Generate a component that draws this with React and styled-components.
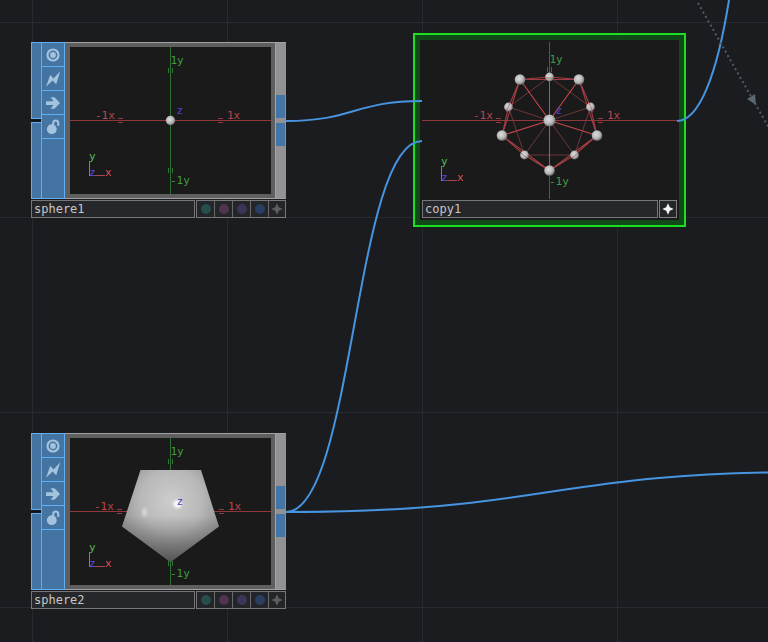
import React from "react";
import styled, { createGlobalStyle } from "styled-components";

const MONO = '"DejaVu Sans Mono", "Liberation Mono", monospace';

const GlobalStyle = createGlobalStyle`
  *, *::before, *::after { box-sizing: border-box; }
  body { margin: 0; background: #1b1c20; font-family: ${MONO}; }
  button, input { font: inherit; margin: 0; padding: 0; border-radius: 0; }
`;

const Network = styled.main`
  position: relative;
  min-height: 100vh;
  overflow: hidden;
  background-color: #1b1c20;
  background-image:
    linear-gradient(to right, #292a30 1px, transparent 1px),
    linear-gradient(to bottom, #292a30 1px, transparent 1px);
  background-size: 195px 195px;
  background-position: 32px 22px;
`;

const Wires = styled.svg`
  position: absolute;
  inset: 0;
  width: 100%;
  height: 100%;
  pointer-events: none;
`;

const Node = styled.section`
  position: absolute;
  left: ${(p) => p.$x}px;
  top: ${(p) => p.$y}px;
  width: ${(p) => p.$w}px;
  display: flex;
  flex-direction: column;
  gap: 1px;
`;

const SelectedNode = styled(Node)`
  padding: 2px;
  background: #1a1a1b;
  box-shadow: 0 0 0 5px #104a19;
  outline: 2px solid #1bdf20;
  outline-offset: 5px;
`;

const NodeBody = styled.div`
  display: flex;
  height: 157px;
  background: #5f5f5f;
  border-top: 1px solid #a2a2a2;
  border-bottom: 1px solid #a2a2a2;
`;

const Rail = styled.div`
  display: flex;
  margin: -1px 0;
`;

const InputRail = styled.div`
  display: flex;
  flex-direction: column;
  gap: 3px;
  width: 10px;
  background: #14161a;
`;

const InputPort = styled.button`
  flex: 1;
  background: #4474a2;
  border: 1px solid #62aef4;
  border-right: 0;
`;

const FlagColumn = styled.div`
  display: flex;
  flex-direction: column;
  width: 24px;
  background: #4474a2;
  border: 1px solid #62aef4;
`;

const FlagButton = styled.button`
  display: grid;
  place-items: center;
  height: 24px;
  background: transparent;
  border: 0;
  border-bottom: 1px solid #62aef4;
`;

const Viewer = styled.div`
  flex: 1;
  margin: 4px;
  margin-left: 5px;
  background: #1a1a1a;
`;

const Drawing = styled.svg`
  display: block;
  width: 100%;
  height: 100%;
  font: 11px ${MONO};
`;

const OutputRail = styled.div`
  display: flex;
  flex-direction: column;
  justify-content: center;
  gap: 5px;
  width: 11px;
  padding: 0 1px 0 0;
  background: #929294;
  border-left: 1px solid #a4a4a6;
`;

const OutputPort = styled.button`
  height: 23px;
  background: #4376a6;
  border: 0;
`;

const Footer = styled.div`
  display: flex;
  gap: 1px;
`;

const NameInput = styled.input`
  flex: 1;
  min-width: 0;
  height: 18px;
  padding: 0 2px 1px;
  color: #c6c6c6;
  background: #26272a;
  border: 1px solid #77777a;
  font-size: 12px;
`;

const Swatches = styled.div`
  display: flex;
  border: 1px solid #77777a;
`;

const SwatchButton = styled.button`
  display: grid;
  place-items: center;
  width: 18px;
  height: 16px;
  background: #242528;
  border: 0;
  border-right: 1px solid #69696c;
  &:last-child { width: 16px; border-right: 0; }
`;

const ActiveButton = styled.button`
  display: grid;
  place-items: center;
  width: 18px;
  height: 18px;
  background: #252628;
  border: 1px solid #808082;
`;

const Dot = styled.span`
  width: 10px;
  height: 10px;
  border-radius: 50%;
  background: ${(p) => p.$color};
`;

const CopyViewer = styled.div`
  height: 157px;
  background: #1a1a1a;
`;

const INK = "#a4c3df";

const TargetIcon = () => (
  <svg width="14" height="14" viewBox="0 0 14 14">
    <circle cx="7" cy="7" r="5.5" fill="none" stroke={INK} strokeWidth="2.2" />
    <circle cx="7" cy="7" r="2.9" fill={INK} />
  </svg>
);

const BoltIcon = () => (
  <svg width="16" height="16" viewBox="0 0 16 16">
    <path d="M1 15.8L5.2 4L8.6 7.6L15.2 .3L11.2 13.2L7.6 9.6Z" fill={INK} />
  </svg>
);

const ArrowIcon = () => (
  <svg width="14" height="14" viewBox="0 0 14 14">
    <path d="M0 5.2H7.5L4.6 1.2H8.5L14 7L8.5 12.8H4.6L7.5 9H0Z" fill={INK} />
  </svg>
);

const LockIcon = () => (
  <svg width="14" height="16" viewBox="0 0 14 16">
    <circle cx="5.8" cy="10.2" r="4.9" fill={INK} />
    <path d="M7.2 7V4.2C7.2 .7 12.3 .7 12.3 4.2V7" fill="none" stroke={INK} strokeWidth="2" />
  </svg>
);

const StarIcon = ({ color }) => (
  <svg width="12" height="12" viewBox="0 0 12 12">
    <path d="M6 .3L7.8 4.2L11.7 6L7.8 7.8L6 11.7L4.2 7.8L.3 6L4.2 4.2Z" fill={color} />
  </svg>
);

const RED = "#b8484c";
const GREEN = "#419b45";
const BLUE = "#4845c8";

const BallGradient = ({ id }) => (
  <radialGradient id={id} cx=".42" cy=".4" r=".62">
    <stop offset="0" stopColor="#dedede" />
    <stop offset=".6" stopColor="#b8b8b8" />
    <stop offset="1" stopColor="#696969" />
  </radialGradient>
);

const Axes = ({ w, h, cx, cy }) => (
  <g>
    <path d={`M0 ${cy}H${w}`} stroke="#8f383c" />
    <path d={`M${cx} 0V${h}`} stroke="#2f7135" />
  </g>
);

const Labels = ({ cx, cy, h, left, right, top, low, bottomTicks, rightTicks, leftTicks, lowX }) => (
  <g>
    <path d={`M${leftTicks} ${cy - 2}h5m-5 4h5M${rightTicks} ${cy - 2}h5m-5 4h5`} stroke="#94393d" />
    <path d={`M${cx - 2} ${top + 4}v5m4 -5v5`} stroke="#2f7737" />
    {bottomTicks && <path d={`M${cx - 2} ${bottomTicks}v5m4 -5v5`} stroke="#2f7737" />}
    <text x={left} y={cy - 2} fill={RED}>-1x</text>
    <text x={right} y={cy - 2} fill={RED}>1x</text>
    <text x={cx} y={top} fill={GREEN}>1y</text>
    <text x={lowX} y={low} fill={GREEN}>-1y</text>
    <text x={cx + 6} y={cy - 7} fill={BLUE}>z</text>
    <path d={`M19.5 ${h - 33}v15`} stroke="#45a84a" />
    <path d={`M20 ${h - 18.5}h15`} stroke="#a8444b" />
    <text x="19" y={h - 34} fill="#55b95b">y</text>
    <text x="19" y={h - 18} fill="#4c4be0">z</text>
    <text x="35" y={h - 18} fill="#d8565d">x</text>
  </g>
);

const SmallSphere = () => (
  <Drawing viewBox="0 0 201 147" role="img" aria-label="Small sphere">
    <defs><BallGradient id="ball-one" /></defs>
    <Axes w={201} h={147} cx={100.5} cy={73.5} />
    <circle cx="100.5" cy="73.5" r="4.7" fill="url(#ball-one)" />
    <Labels cx={100.5} cy={73.5} h={147} left={25} right={157} top={17} low={137}
      lowX={100} leftTicks={48} rightTicks={148} bottomTicks={121} />
  </Drawing>
);

const SOLID = "M70.5 32H131L149 88.5L100.5 124L52 88.5Z";

const LargeSphere = () => (
  <Drawing viewBox="0 0 201 147" role="img" aria-label="Low resolution sphere">
    <defs>
      <radialGradient id="shade" gradientUnits="userSpaceOnUse" cx="101" cy="63" r="62">
        <stop offset="0" stopColor="#cdcdcd" />
        <stop offset=".5" stopColor="#b8b8b8" />
        <stop offset="1" stopColor="#858585" />
      </radialGradient>
      <linearGradient id="floor" x1="0" y1="0" x2="0" y2="1">
        <stop offset=".5" stopColor="#444" stopOpacity="0" />
        <stop offset="1" stopColor="#3a3a3a" stopOpacity=".65" />
      </linearGradient>
      <radialGradient id="shine">
        <stop offset="0" stopColor="#fff" />
        <stop offset=".4" stopColor="#fff" stopOpacity=".8" />
        <stop offset="1" stopColor="#fff" stopOpacity="0" />
      </radialGradient>
    </defs>
    <Axes w={201} h={147} cx={100.5} cy={73.5} />
    <path d={SOLID} fill="url(#shade)" />
    <path d={SOLID} fill="url(#floor)" />
    <circle cx="107.5" cy="66" r="6" fill="url(#shine)" />
    <ellipse cx="74.5" cy="74" rx="4" ry="6" fill="url(#shine)" opacity=".4" />
    <Labels cx={100.5} cy={73.5} h={147} left={24} right={158} top={17} low={139}
      lowX={100} leftTicks={47} rightTicks={149} bottomTicks={123} />
  </Drawing>
);

const FRONT = [[98, 37.5], [157, 37.5], [175, 93.5], [127.5, 128.5], [80, 93.5]];
const BACK = [[127.5, 35], [168.5, 65], [152.5, 113], [102.5, 113], [86.5, 65]];
const ring = (pts) => `M${pts.map((p) => p.join(" ")).join("L")}Z`;
const spokes = (pts) => pts.map((p) => `M127.5 78.5L${p.join(" ")}`).join("");
const zigzag = ring(FRONT.flatMap((p, i) => [p, BACK[i]]));

const CopiedSpheres = () => (
  <Drawing viewBox="0 0 255 157" role="img" aria-label="Spheres copied to the points of a sphere">
    <defs><BallGradient id="ball-copy" /></defs>
    <Axes w={255} h={157} cx={127.5} cy={78.5} />
    <g fill="none">
      <path d={ring(BACK) + spokes(BACK)} stroke="#843c40" strokeWidth=".8" />
      <path d={zigzag + ring(FRONT)} stroke="#a13e43" strokeWidth="1.1" />
      <path d={spokes(FRONT)} stroke="#c8484b" strokeWidth="1.1" />
      <path d="M127.5 39V74" stroke="#548844" />
    </g>
    <g fill="url(#ball-copy)">
      {BACK.map(([x, y]) => <circle key={`${x}-${y}`} cx={x} cy={y} r="4.4" />)}
      {FRONT.map(([x, y]) => <circle key={`${x}-${y}`} cx={x} cy={y} r="5.3" />)}
      <circle cx="127.5" cy="78.5" r="6" />
    </g>
    <path d="M123 36h9M84 70l4-9M171 70l-4-9M99 111l6 5M156 111l-6 5" fill="none" stroke="#9b5558" strokeWidth=".7" />
    <Labels cx={127.5} cy={78.5} h={157} left={51} right={185} top={21} low={143}
      lowX={127} leftTicks={74} rightTicks={176} />
  </Drawing>
);

const FLAGS = [
  ["Viewer", TargetIcon],
  ["Bypass", BoltIcon],
  ["Clone", ArrowIcon],
  ["Lock", LockIcon],
];
const SWATCHES = [
  ["Display", "#264f4b"],
  ["Render", "#50344f"],
  ["Pickable", "#3b3558"],
  ["Compare", "#293f61"],
];

const OperatorNode = ({ name, x, y, children }) => (
  <Node $x={x} $y={y} $w={255} aria-label={name}>
    <NodeBody>
      <Rail>
        <InputRail>
          <InputPort aria-label="Input, upper part" />
          <InputPort aria-label="Input, lower part" />
        </InputRail>
        <FlagColumn>
          {FLAGS.map(([label, Icon]) => (
            <FlagButton key={label} aria-label={label}><Icon /></FlagButton>
          ))}
        </FlagColumn>
      </Rail>
      <Viewer>{children}</Viewer>
      <OutputRail>
        <OutputPort aria-label="Output, upper part" />
        <OutputPort aria-label="Output, lower part" />
      </OutputRail>
    </NodeBody>
    <Footer>
      <NameInput aria-label="Operator name" defaultValue={name} spellCheck={false} />
      <Swatches>
        {SWATCHES.map(([label, color]) => (
          <SwatchButton key={label} aria-label={label}><Dot $color={color} /></SwatchButton>
        ))}
        <SwatchButton aria-label="Activate viewer"><StarIcon color="#5d5e61" /></SwatchButton>
      </Swatches>
    </Footer>
  </Node>
);

export default function App() {
  return (
    <>
      <GlobalStyle />
      <Network>
        <OperatorNode name="sphere1" x={31} y={42}><SmallSphere /></OperatorNode>
        <OperatorNode name="sphere2" x={31} y={433}><LargeSphere /></OperatorNode>
        <SelectedNode $x={420} $y={40} $w={259} aria-label="copy1">
          <CopyViewer><CopiedSpheres /></CopyViewer>
          <Footer>
            <NameInput aria-label="Operator name" defaultValue="copy1" spellCheck={false} />
            <ActiveButton aria-label="Activate viewer"><StarIcon color="#f4f4f4" /></ActiveButton>
          </Footer>
        </SelectedNode>
        <Wires aria-hidden="true">
          <g fill="none" stroke="#4794e0" strokeWidth="2">
            <path d="M286 121C354 121 354 101 422 101" />
            <path d="M286 512C354 512 354 141 422 141" />
            <path d="M286 512C549 512 549 472 812 472" />
            <path d="M677 121C699 121 717 75 729 0" />
          </g>
          <path d="M31 120.5h10M31 511.5h10" stroke="#14161a" strokeWidth="3" />
          <path d="M698 3L782 151" stroke="#555a60" strokeWidth="2" strokeDasharray="2 3" />
          <path d="M747 99L755 94L756 105Z" fill="#596771" />
        </Wires>
      </Network>
    </>
  );
}
